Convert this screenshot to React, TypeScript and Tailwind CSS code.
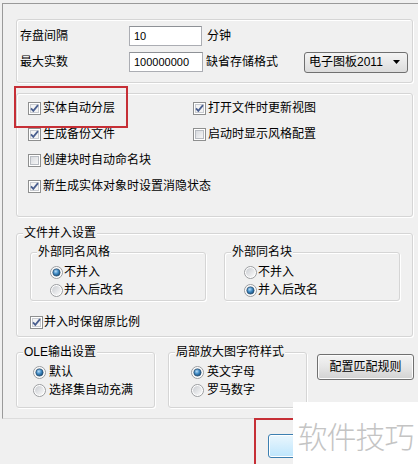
import React from "react";

const font = { fontFamily: '"Liberation Sans", "Noto Sans CJK SC", sans-serif' };

function CheckBox({ checked }: { checked?: boolean }) {
  return (
    <svg width="13" height="13" viewBox="0 0 13 13" className="shrink-0">
      <defs>
        <linearGradient id="cbg" x1="0" y1="0" x2="1" y2="1">
          <stop offset="0" stopColor="#d6d9de" />
          <stop offset="1" stopColor="#f7f7f7" />
        </linearGradient>
      </defs>
      <rect x="0.5" y="0.5" width="12" height="12" fill="#fff" stroke="#8e8f8f" />
      <rect x="2.5" y="2.5" width="8" height="8" fill={checked ? "#f4f4f4" : "url(#cbg)"} stroke={checked ? "#c9ccd1" : "#b8bcc2"} />
      {checked && (
        <path d="M3 6.3 L5.3 8.8 L10 3.2" fill="none" stroke="#4a5f8f" strokeWidth="1.8" />
      )}
    </svg>
  );
}

function Radio({ checked }: { checked?: boolean }) {
  return (
    <svg width="13" height="13" viewBox="0 0 13 13" className="shrink-0">
      <defs>
        <linearGradient id="rbg" x1="0" y1="0" x2="1" y2="1">
          <stop offset="0" stopColor="#c9ccd1" />
          <stop offset="1" stopColor="#fbfbfb" />
        </linearGradient>
        <radialGradient id="rdot" cx="0.4" cy="0.35" r="0.7">
          <stop offset="0" stopColor="#b8dcf7" />
          <stop offset="0.5" stopColor="#3f8ac4" />
          <stop offset="1" stopColor="#17466f" />
        </radialGradient>
      </defs>
      <circle cx="6.5" cy="6.5" r="6" fill="#fff" stroke="#9a9c9f" />
      <circle cx="6.5" cy="6.5" r="4.5" fill="url(#rbg)" />
      {checked && <circle cx="6.5" cy="6.5" r="3.6" fill="url(#rdot)" stroke="#264e70" strokeWidth="0.7" />}
    </svg>
  );
}

function Group({ title, className, children }: { title?: string; className?: string; children: React.ReactNode }) {
  return (
    <div className={`relative rounded-[3px] border border-[#d5d5d5] shadow-[inset_1px_1px_0_#fff,1px_1px_0_#fff] ${className ?? ""}`}>
      {title && (
        <span className="absolute left-[6px] top-[-8px] bg-[#f0f0f0] px-[1px] text-[12px] leading-[14px]">{title}</span>
      )}
      {children}
    </div>
  );
}

function CheckRow({ label, checked }: { label: string; checked?: boolean }) {
  return (
    <div className="flex h-[26px] items-center gap-[2px]">
      <CheckBox checked={checked} />
      <span>{label}</span>
    </div>
  );
}

function RadioRow({ label, checked, gap }: { label: string; checked?: boolean; gap: string }) {
  return (
    <div className={`flex h-[18px] items-center ${gap}`}>
      <Radio checked={checked} />
      <span>{label}</span>
    </div>
  );
}

export default function App() {
  return (
    <div className="relative h-[464px] w-[418px] overflow-hidden bg-[#f0f0f0] text-[12px] leading-[14px] text-black" style={font}>
      <div className="ml-[2px] mt-[3px] flex flex-col border-b border-l border-t border-b-[#dcdcdc] border-l-[#9a9a9a] border-t-[#9a9a9a] pb-[10px] pl-[13px]">
        <Group className="mt-[15px] h-[64px] w-[397px] pl-[3px] pt-[6px]">
          <div className="flex h-[20px] items-center">
            <span className="w-[109px]">存盘间隔</span>
            <div className="flex h-[20px] w-[73px] items-center border border-[#abadb3] border-t-[#8e9196] bg-white pl-[4px] text-[11px]">10</div>
            <span className="ml-[5px]">分钟</span>
          </div>
          <div className="mt-[6px] flex h-[20px] items-center">
            <span className="w-[109px]">最大实数</span>
            <div className="flex h-[20px] w-[74px] items-center border border-[#abadb3] border-t-[#8e9196] bg-white pl-[4px] text-[11px]">100000000</div>
            <span className="ml-[3px] w-[98px]">缺省存储格式</span>
            <div className="flex h-[21px] w-[104px] items-center justify-between rounded-[3px] border border-[#707070] bg-gradient-to-b from-[#f4f4f4] to-[#dcdcdc] pl-[4px] pr-[6px]">
              <span>电子图板2011</span>
              <svg width="8" height="5" viewBox="0 0 8 5">
                <path d="M0 0 H7 L3.5 4 Z" fill="#000" />
              </svg>
            </div>
          </div>
        </Group>

        <Group className="mt-[10px] h-[124px] w-[397px] pl-[11px] pt-[1px]">
          <div className="grid grid-cols-[165px_1fr]">
            <CheckRow label="实体自动分层" checked />
            <CheckRow label="打开文件时更新视图" checked />
            <CheckRow label="生成备份文件" checked />
            <CheckRow label="启动时显示风格配置" />
            <CheckRow label="创建块时自动命名块" />
            <div />
            <div className="col-span-2">
              <CheckRow label="新生成实体对象时设置消隐状态" checked />
            </div>
          </div>
        </Group>

        <Group title="文件并入设置" className="mt-[16px] h-[104px] w-[397px] pl-[13px] pt-[18px]">
          <div className="flex gap-[18px]">
            <Group title="外部同名风格" className="h-[49px] w-[176px] pl-[19px] pt-[10px]">
              <RadioRow label="不并入" checked gap="gap-[1px]" />
              <RadioRow label="并入后改名" gap="gap-[1px]" />
            </Group>
            <Group title="外部同名块" className="h-[49px] w-[176px] pl-[19px] pt-[10px]">
              <RadioRow label="不并入" gap="gap-[1px]" />
              <RadioRow label="并入后改名" checked gap="gap-[1px]" />
            </Group>
          </div>
          <div className="mt-[12px] flex h-[18px] items-center gap-[1px]">
            <CheckBox checked />
            <span>并入时保留原比例</span>
          </div>
        </Group>

        <div className="mt-[15px] flex items-start">
          <Group title="OLE输出设置" className="h-[56px] w-[139px] pl-[16px] pt-[10px]">
            <RadioRow label="默认" checked gap="gap-[3px]" />
            <RadioRow label="选择集自动充满" gap="gap-[3px]" />
          </Group>
          <Group title="局部放大图字符样式" className="ml-[13px] h-[56px] w-[139px] pl-[22px] pt-[10px]">
            <RadioRow label="英文字母" checked gap="gap-[3px]" />
            <RadioRow label="罗马数字" gap="gap-[3px]" />
          </Group>
          <button className="ml-[10px] mt-[2px] h-[26px] w-[97px] rounded-[3px] border border-[#707070] bg-gradient-to-b from-[#f4f4f4] via-[#e6e6e6] to-[#d2d2d2] text-[12px] shadow-[inset_0_0_0_1px_#fcfcfc]">
            配置匹配规则
          </button>
        </div>
      </div>

      <div className="pl-[268px] pt-[15px]">
        <button className="h-[24px] w-[75px] rounded-[3px] border border-[#3c7fb1] bg-gradient-to-b from-[#eaf6fd] to-[#bee6fd] text-[12px] shadow-[inset_0_0_0_1px_#fff]">
          确定
        </button>
      </div>

      <div className="absolute left-[14px] top-[86px] h-[42px] w-[114px] border-2 border-[#c62f36]" />
      <div className="absolute left-[254px] top-[418px] h-[50px] w-[60px] border-2 border-[#c62f36]" />
      <div className="absolute left-[293px] top-[402px] flex h-[62px] w-[125px] items-center justify-center bg-white pt-[4px]">
        <span className="text-[30px] font-light leading-none tracking-[-1px] text-[#c4c4c4]" style={{ fontFamily: '"Noto Sans CJK SC", sans-serif' }}>软件技巧</span>
      </div>
    </div>
  );
}
